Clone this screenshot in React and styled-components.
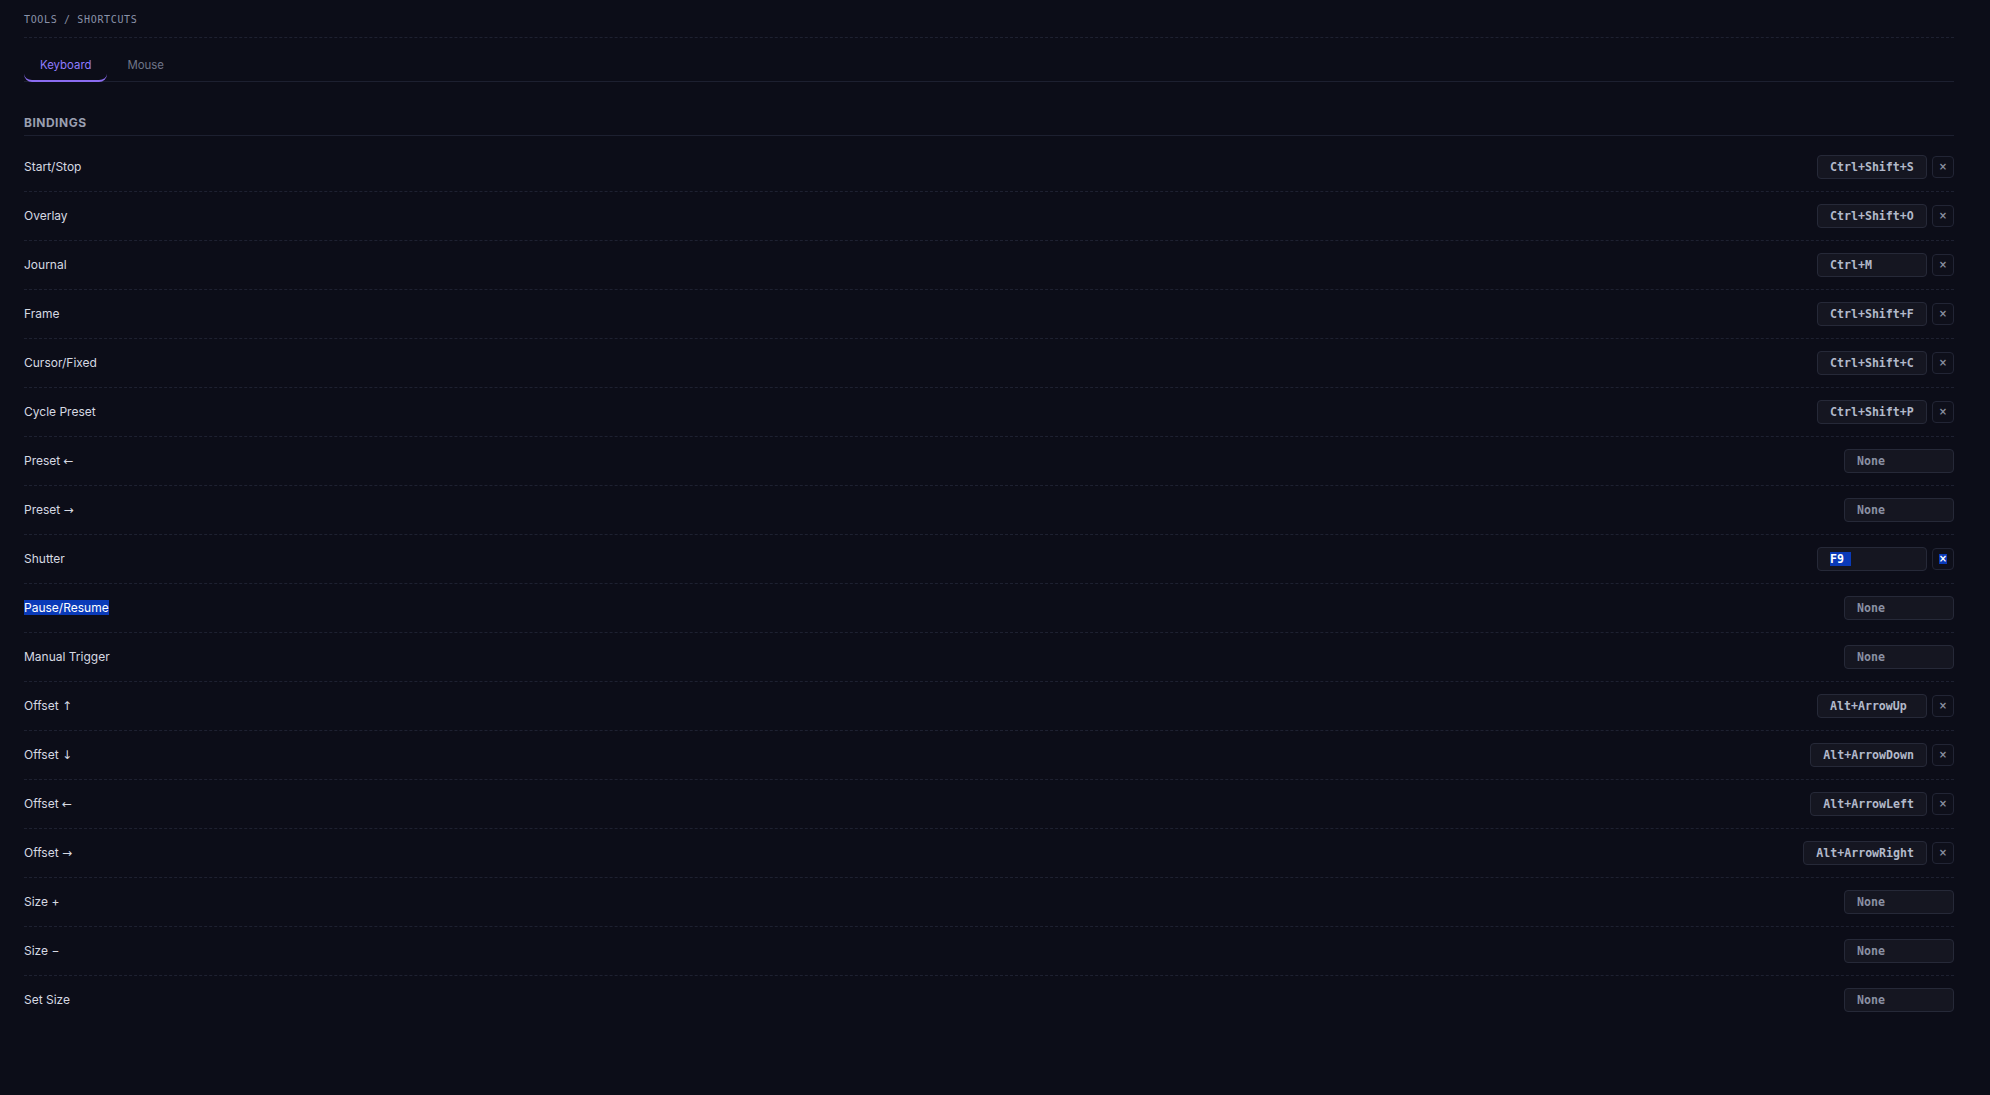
import React from "react";
import styled, { createGlobalStyle } from "styled-components";

const GlobalStyle = createGlobalStyle`
  html, body {
    margin: 0;
    padding: 0;
    background: #0c0d18;
  }
  body {
    font-family: Inter, "Noto Sans", "Liberation Sans", sans-serif;
    color: #d6d9e2;
    -webkit-font-smoothing: antialiased;
  }
  * { box-sizing: border-box; }
`;

const Page = styled.div`
  min-height: 1095px;
  padding: 0 36px 0 24px;
  background: #0c0d18;
`;

const Breadcrumb = styled.div`
  height: 38px;
  display: flex;
  align-items: center;
  padding-top: 1px;
  border-bottom: 1px dashed #1e2131;
  font-family: "DejaVu Sans Mono", "Liberation Mono", monospace;
  font-size: 10px;
  letter-spacing: 0.65px;
  color: #8a92a8;
  text-transform: uppercase;
`;

const TabBar = styled.div`
  display: flex;
  gap: 4px;
  margin-top: 10px;
  border-bottom: 1px solid #1d2030;
`;

const Tab = styled.button`
  appearance: none;
  background: transparent;
  border: none;
  border-bottom: 2px solid ${(p) => (p.$active ? "#8b6cf0" : "transparent")};
  border-radius: 0 0 8px 8px;
  padding: 10px 16px 7px;
  margin-bottom: -1px;
  font-family: inherit;
  font-size: 11.4px;
  line-height: 15px;
  color: ${(p) => (p.$active ? "#8f7cff" : "#6f7588")};
  cursor: pointer;
`;

const SectionTitle = styled.h2`
  margin: 33px 0 0;
  padding-bottom: 5px;
  border-bottom: 1px solid #1d2030;
  font-size: 12px;
  line-height: 15px;
  font-weight: 700;
  letter-spacing: 0.5px;
  color: #9a9fb0;
  text-transform: uppercase;
`;

const List = styled.div`
  margin-top: 7px;
`;

const Row = styled.div`
  display: flex;
  align-items: center;
  justify-content: space-between;
  padding: 12px 0;
  border-bottom: 1px dashed ${(p) => (p.$last ? "transparent" : "#1e2131")};
`;

const Label = styled.span`
  font-size: 12px;
  line-height: 16px;
  color: #d6d9e2;
`;

// Arrow glyphs in the labels are drawn with DejaVu's long thin arrows
const Arrow = styled.span`
  font-family: "DejaVu Sans", sans-serif;
  font-size: 12px;
`;

const Controls = styled.div`
  display: flex;
  align-items: center;
  gap: 5px;
`;

const KeyBox = styled.div`
  height: 24px;
  min-width: 110px;
  padding: 0 12px;
  display: flex;
  align-items: center;
  border: 1px solid #262938;
  border-radius: 4px;
  background: #151621;
  font-family: "DejaVu Sans Mono", "Liberation Mono", monospace;
  font-weight: 700;
  font-size: 11.6px;
  color: ${(p) => (p.$empty ? "#8a90a3" : "#b2b9ca")};
  white-space: pre;
`;

const ClearButton = styled.button`
  appearance: none;
  width: 22px;
  height: 22px;
  padding: 0;
  display: flex;
  align-items: center;
  justify-content: center;
  border: 1px solid #222535;
  border-radius: 4px;
  background: #0e0f1a;
  color: #8a90a0;
  font-family: "DejaVu Sans", sans-serif;
  font-size: 10px;
  font-weight: 700;
  line-height: 1;
  cursor: pointer;
`;

// Text that is currently selected in the page
const Selected = styled.span`
  background: #0a3ab8;
  color: #ffffff;
  padding-right: ${(p) => p.$trail || 0}px;
`;

const bindings = [
  { name: "Start/Stop", key: "Ctrl+Shift+S" },
  { name: "Overlay", key: "Ctrl+Shift+O" },
  { name: "Journal", key: "Ctrl+M" },
  { name: "Frame", key: "Ctrl+Shift+F" },
  { name: "Cursor/Fixed", key: "Ctrl+Shift+C" },
  { name: "Cycle Preset", key: "Ctrl+Shift+P" },
  { name: "Preset", arrow: "←", key: null },
  { name: "Preset", arrow: "→", key: null },
  { name: "Shutter", key: "F9", selectedKey: true },
  { name: "Pause/Resume", key: null, selectedLabel: true },
  { name: "Manual Trigger", key: null },
  { name: "Offset", arrow: "↑", key: "Alt+ArrowUp" },
  { name: "Offset", arrow: "↓", key: "Alt+ArrowDown" },
  { name: "Offset", arrow: "←", key: "Alt+ArrowLeft" },
  { name: "Offset", arrow: "→", key: "Alt+ArrowRight" },
  { name: "Size +", key: null },
  { name: "Size −", key: null },
  { name: "Set Size", key: null },
];

function BindingRow({ item, last }) {
  return (
    <Row $last={last}>
      <Label>
        {item.selectedLabel ? <Selected>{item.name}</Selected> : item.name}
        {item.arrow && (
          <>
            {" "}
            <Arrow>{item.arrow}</Arrow>
          </>
        )}
      </Label>
      <Controls>
        {item.key ? (
          <>
            <KeyBox>
              {item.selectedKey ? (
                <Selected $trail={7}>{item.key}</Selected>
              ) : (
                item.key
              )}
            </KeyBox>
            <ClearButton title="Clear">
              {item.selectedKey ? <Selected>×</Selected> : "×"}
            </ClearButton>
          </>
        ) : (
          <KeyBox $empty>None</KeyBox>
        )}
      </Controls>
    </Row>
  );
}

export default function App() {
  return (
    <>
      <GlobalStyle />
      <Page>
        <Breadcrumb>Tools / Shortcuts</Breadcrumb>
        <TabBar>
          <Tab $active>Keyboard</Tab>
          <Tab>Mouse</Tab>
        </TabBar>
        <SectionTitle>Bindings</SectionTitle>
        <List>
          {bindings.map((b, i) => (
            <BindingRow
              key={b.name + (b.arrow || "") + (b.key || "")}
              item={b}
              last={i === bindings.length - 1}
            />
          ))}
        </List>
      </Page>
    </>
  );
}
